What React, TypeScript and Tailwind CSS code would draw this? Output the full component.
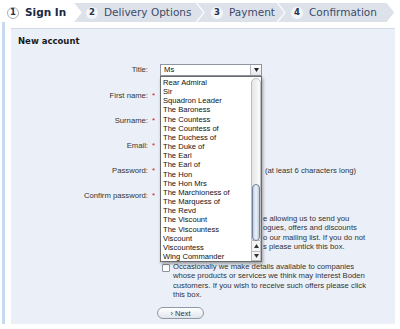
import React from "react";

const tabs = [
  { n: "1", label: "Sign In", w: "w-[70px]", pl: "pl-[4px]", active: true },
  { n: "2", label: "Delivery Options", w: "w-[123px]", pl: "pl-[13px]", active: false },
  { n: "3", label: "Payment", w: "w-[81px]", pl: "pl-[15px]", active: false },
  { n: "4", label: "Confirmation", w: "w-[110px]", pl: "pl-[14px]", active: false },
];

const titles = [
  "Rear Admiral",
  "Sir",
  "Squadron Leader",
  "The Baroness",
  "The Countess",
  "The Countess of",
  "The Duchess of",
  "The Duke of",
  "The Earl",
  "The Earl of",
  "The Hon",
  "The Hon Mrs",
  "The Marchioness of",
  "The Marquess of",
  "The Revd",
  "The Viscount",
  "The Viscountess",
  "Viscount",
  "Viscountess",
  "Wing Commander",
];

function Chevron({ fill }: { fill: string }) {
  return (
    <svg
      className="absolute left-full top-0 z-10"
      width="9"
      height="19"
      viewBox="0 0 9 19"
    >
      <polygon points="0,0 8,9.5 0,19" fill={fill} />
      <polyline points="0,-0.5 8,9.5 0,19.5" fill="none" stroke="#ffffff" strokeWidth="1.2" />
    </svg>
  );
}

function TitleSelect() {
  return (
    <div className="relative ml-[1px] flex h-[12px] w-[102px] items-center border border-[#8f96a1] bg-white">
      <span className="pl-[3px] text-[7.7px] leading-none text-[#111]">Ms</span>
      <div className="absolute right-0 top-0 flex h-full w-[11px] items-center justify-center border-l border-[#b5bac2] bg-gradient-to-b from-white to-[#e6e8ec]">
        <svg width="5" height="4" viewBox="0 0 5 4">
          <polygon points="0,0 5,0 2.5,4" fill="#222" />
        </svg>
      </div>
      <div className="absolute left-[-1px] top-[11px] z-20 h-[186px] w-[102px] border border-[#6b6b6b] bg-white pl-[2px] pt-[1.5px] shadow-[1px_2px_3px_rgba(0,0,0,0.35)]">
        {titles.map((t) => (
          <div key={t} className="h-[9.16px] whitespace-nowrap text-[7.6px] leading-[9.16px] text-[#111]">
            {t}
          </div>
        ))}
        <div className="absolute bottom-0 right-0 top-[1px] flex w-[10px] flex-col">
          <div className="relative flex-1 rounded-t-full border border-[#bdbdbd] bg-gradient-to-r from-[#e6e6e6] to-[#fbfbfb]">
            <div className="absolute left-0 right-0 top-[105px] h-[57px] rounded-full border border-[#6f82a0] bg-gradient-to-r from-[#bfcbdc] via-[#eef3f9] to-[#bfcbdc]" />
          </div>
          <div className="flex h-[10px] items-center justify-center border-x border-[#bdbdbd] bg-[#f4f4f4]">
            <svg width="5" height="4" viewBox="0 0 5 4">
              <polygon points="2.5,0 5,4 0,4" fill="#333" />
            </svg>
          </div>
          <div className="flex h-[10px] items-center justify-center border border-[#bdbdbd] bg-[#f4f4f4]">
            <svg width="5" height="4" viewBox="0 0 5 4">
              <polygon points="0,0 5,0 2.5,4" fill="#333" />
            </svg>
          </div>
        </div>
      </div>
    </div>
  );
}

function Field({
  label,
  required,
  children,
  className = "",
}: {
  label: string;
  required?: boolean;
  children?: React.ReactNode;
  className?: string;
}) {
  return (
    <div className={`flex h-[25px] items-center ${className}`}>
      <div className="w-[137px] text-right text-[7.7px] text-[#333]">{label}</div>
      <div className="w-[11px] text-center text-[8px] text-[#d0101b]">{required ? "*" : ""}</div>
      {children ?? <div className="ml-[1px] h-[14px] w-[100px] border border-[#9aa0aa] bg-white" />}
    </div>
  );
}

export default function App() {
  return (
    <div className="h-[329px] w-[400px] overflow-hidden bg-white font-['Liberation_Sans',Arial,sans-serif]">
      <div className="ml-[3px] mt-[3px] flex h-[19px] font-['DejaVu_Sans',Verdana,sans-serif]">
        {tabs.map((tab) => (
          <div
            key={tab.n}
            className={`relative flex h-full items-center gap-[6px] ${tab.w} ${tab.pl} ${
              tab.active ? "bg-white" : "bg-[#dde2ea]"
            }`}
          >
            <span
              className={`flex h-[12px] w-[12px] items-center justify-center rounded-full text-[8.5px] font-bold leading-none text-[#26324d] ${
                tab.active ? "border border-[#a9b2bf] bg-white" : "bg-[#f3f5f9]"
              }`}
            >
              {tab.n}
            </span>
            <span
              className={`whitespace-nowrap text-[10.5px] leading-none ${
                tab.active ? "font-bold text-[#1b2744]" : "text-[#3b4b68]"
              }`}
            >
              {tab.label}
            </span>
            <Chevron fill={tab.active ? "#ffffff" : "#dde2ea"} />
          </div>
        ))}
      </div>

      <div className="ml-[2px] h-[302px] w-[393px] border-l-[3px] border-[#c7d9ee] pl-[6px] pt-[6px]">
        <div className="h-full border-t border-[#cfdbea] bg-[#ebf0f8]">
          <div className="pl-[7px] pt-[6px] font-['DejaVu_Sans',Verdana,sans-serif] text-[8.5px] font-bold leading-[12px] text-[#1a1a1a]">
            New account
          </div>

          <div className="mt-[10px]">
            <Field label="Title:">
              <TitleSelect />
            </Field>
            <Field label="First name:" required className="mt-[1px]" />
            <Field label="Surname:" required />
            <Field label="Email:" required />
            <Field label="Password:" required>
              <div className="ml-[1px] h-[14px] w-[100px] border border-[#9aa0aa] bg-white" />
              <span className="ml-[5px] whitespace-nowrap text-[7.7px] text-[#333]">(at least 6 characters long)</span>
            </Field>
            <Field label="Confirm password:" required />
          </div>

          {/* first opt-in: its start is hidden under the open title list */}
          <div className="mt-[6px] flex text-[7.7px] leading-[9.3px] text-[#333]">
            <div className="ml-[151px] mt-[1px] h-[8px] w-[8px] shrink-0 rounded-[1px] border border-[#8d939c] bg-white" />
            <div className="ml-[93px] whitespace-nowrap">
              <div>e allowing us to send you</div>
              <div>ogues, offers and discounts</div>
              <div>o our mailing list. If you do not</div>
              <div>s please untick this box.</div>
            </div>
          </div>

          <div className="mt-[11px] flex gap-[3px] pl-[151px] text-[7.7px] leading-[9.3px] text-[#333]">
            <div className="mt-[1.5px] h-[8px] w-[8px] shrink-0 rounded-[1px] border border-[#8d939c] bg-white" />
            <div className="whitespace-nowrap">
              <div>Occasionally we make details available to companies</div>
              <div>whose products or services we think may interest Boden</div>
              <div>customers. If you wish to receive such offers please click</div>
              <div>this box.</div>
            </div>
          </div>

          <div className="mt-[8px] pl-[146px]">
            <button className="flex h-[12px] w-[47px] items-center justify-center rounded-full border border-[#8f98a6] bg-gradient-to-b from-white to-[#e1e5ec] text-[7.5px] leading-none text-[#2a3550]">
              › Next
            </button>
          </div>
        </div>
      </div>
    </div>
  );
}
